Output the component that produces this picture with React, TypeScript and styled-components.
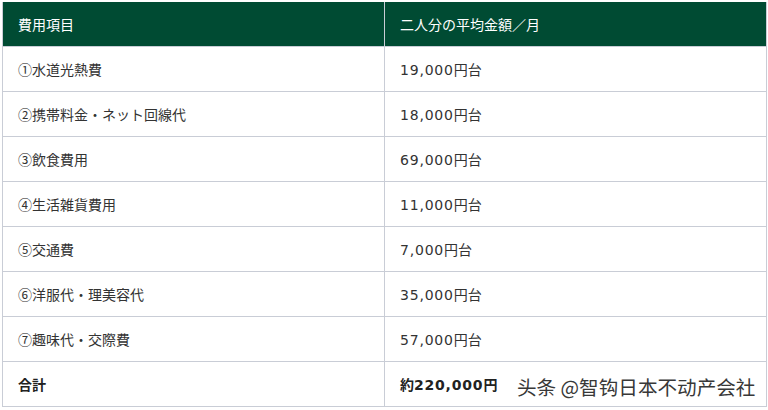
import React from "react";
import styled, { createGlobalStyle } from "styled-components";

const Global = createGlobalStyle`
  html, body { margin: 0; padding: 0; background: #fff; }
  body { font-family: "Noto Sans CJK JP", sans-serif; }
`;

const Page = styled.div`
  position: relative;
  padding: 2px 2px 0 2px;
  width: 764px;
`;

const Table = styled.table`
  width: 764px;
  border-collapse: collapse;
  table-layout: fixed;
  font-size: 14px;
  color: #333;
`;

const HeadCell = styled.th`
  background: #004b33;
  color: #fff;
  font-weight: normal;
  text-align: left;
  height: 44px;
  padding: 0 0 0 15px;
  border: 1px solid #c9cdd6;
  border-top: none;
`;

const Cell = styled.td<{ $bold?: boolean }>`
  height: 44px;
  padding: 0 0 0 15px;
  border: 1px solid #c9cdd6;
  font-weight: ${(p) => (p.$bold ? 700 : 400)};
  color: ${(p) => (p.$bold ? "#222" : "#333")};
`;

const Num = styled.span`
  font-family: "DejaVu Sans", sans-serif;
  letter-spacing: 0.8px;
`;

const Watermark = styled.div`
  position: absolute;
  left: 517px;
  top: 372px;
  font-family: "Noto Sans CJK SC", sans-serif;
  font-size: 19.6px;
  color: #383838;
  text-shadow: 0 0 2px #fff, 0 0 2px #fff;
  white-space: nowrap;
`;

const rows: [string, string][] = [
  ["①水道光熱費", "19,000"],
  ["②携帯料金・ネット回線代", "18,000"],
  ["③飲食費用", "69,000"],
  ["④生活雑貨費用", "11,000"],
  ["⑤交通費", "7,000"],
  ["⑥洋服代・理美容代", "35,000"],
  ["⑦趣味代・交際費", "57,000"],
];

export default function App() {
  return (
    <Page>
      <Global />
      <Table>
        <colgroup>
          <col style={{ width: 382 }} />
          <col style={{ width: 382 }} />
        </colgroup>
        <thead>
          <tr>
            <HeadCell>費用項目</HeadCell>
            <HeadCell>二人分の平均金額／月</HeadCell>
          </tr>
        </thead>
        <tbody>
          {rows.map(([a, b]) => (
            <tr key={a}>
              <Cell>{a}</Cell>
              <Cell>
                <Num>{b}</Num>円台
              </Cell>
            </tr>
          ))}
          <tr>
            <Cell $bold>合計</Cell>
            <Cell $bold>
              約<Num>220,000</Num>円
            </Cell>
          </tr>
        </tbody>
      </Table>
      <Watermark>头条 @智钩日本不动产会社</Watermark>
    </Page>
  );
}
